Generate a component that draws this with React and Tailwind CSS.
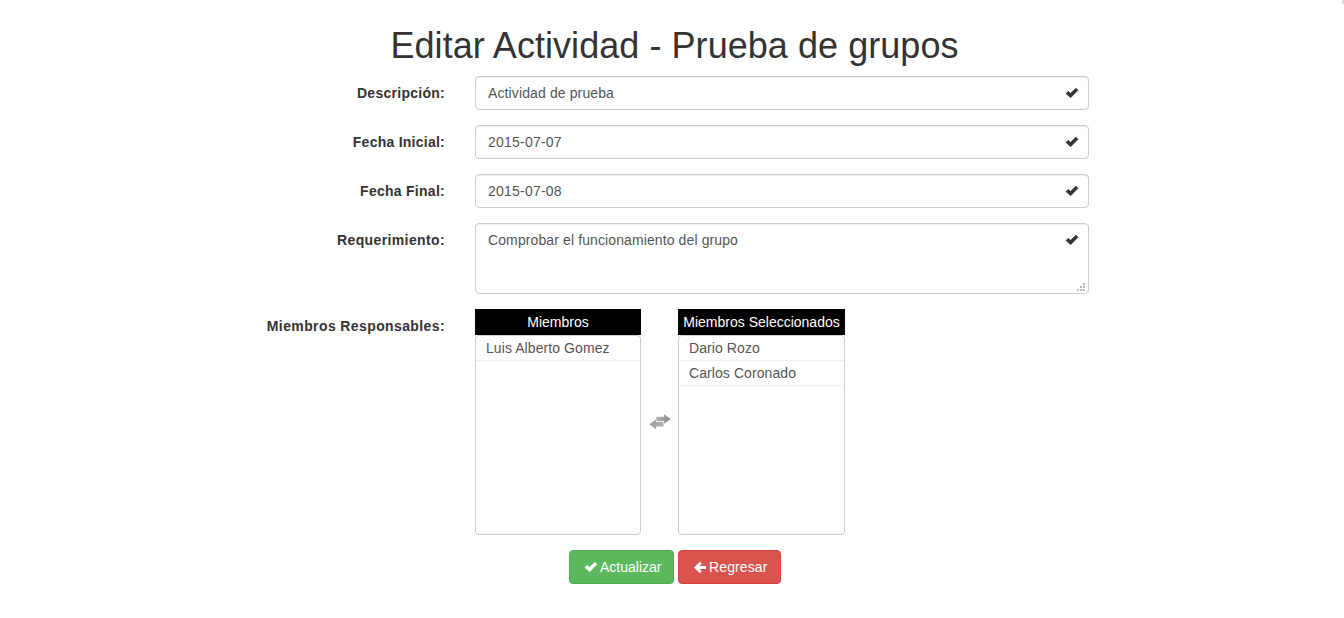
import React from "react";

function Check({ className }) {
  return (
    <svg viewBox="0 0 14 12" className={className} fill="currentColor" aria-hidden="true">
      <path d="M1.1 6.5 3.2 4.4 5.5 6.5 10.9 1.3 12.9 3.3 5.7 10.6Z" stroke="currentColor" strokeWidth="0.9" strokeLinejoin="round" />
    </svg>
  );
}

function Row({ label, children, labelClass }) {
  return (
    <div className="flex gap-[30px]">
      <label className={`w-[445px] shrink-0 pt-[7px] text-right font-bold leading-5 text-[#333] ${labelClass}`}>{label}</label>
      {children}
    </div>
  );
}

const fieldClass =
  "block w-full rounded border border-[#ccc] bg-white px-3 py-1.5 text-sm leading-5 text-[#555] shadow-[inset_0_1px_1px_rgba(0,0,0,0.075)] outline-none";

function Field({ label, value, labelClass, textClass }) {
  return (
    <Row label={label} labelClass={labelClass}>
      <div className="relative w-[614px]">
        <input className={`${fieldClass} h-[34px] ${textClass}`} defaultValue={value} />
        <Check className="absolute right-[10px] top-[11px] h-3 w-[14px] text-[#333]" />
      </div>
    </Row>
  );
}

function MemberList({ title, items, className }) {
  return (
    <div className={`flex h-[226px] flex-col ${className}`}>
      <div className="h-[26px] whitespace-nowrap bg-black pt-[3px] text-center leading-5 text-white">{title}</div>
      <ul className="flex-1 rounded border border-[#ccc]">
        {items.map((name) => (
          <li key={name} className="h-[25px] border-b border-[#eee] pl-[10px] pt-[2px] leading-5 tracking-[0.08px] text-[#555]">
            {name}
          </li>
        ))}
      </ul>
    </div>
  );
}

export default function App() {
  return (
    <div className="relative h-[618px] w-[1344px] overflow-hidden bg-white pt-[26px] font-['Liberation_Sans',Arial,sans-serif] text-sm text-[#333]">
      <div className="absolute right-0 top-0 h-1 w-0.5 bg-[#d5dbe3]" />
      <h1 className="mb-[10px] ml-[2.5px] w-[1344px] text-center text-[36px] font-normal leading-10 tracking-[0.05px]">
        Editar Actividad - Prueba de grupos
      </h1>
      <form className="flex flex-col gap-[15px]" onSubmit={(e) => e.preventDefault()}>
        <Field label="Descripción:" value="Actividad de prueba" labelClass="tracking-[0.27px]" textClass="tracking-[0.12px]" />
        <Field label="Fecha Inicial:" value="2015-07-07" labelClass="tracking-[0.25px]" textClass="tracking-[0.22px]" />
        <Field label="Fecha Final:" value="2015-07-08" labelClass="tracking-[0.27px]" textClass="tracking-[0.22px]" />
        <Row label="Requerimiento:" labelClass="tracking-[0.38px]">
          <div className="relative w-[614px]">
            <textarea
              className={`${fieldClass} h-[71px] resize-none tracking-[0.11px]`}
              defaultValue="Comprobar el funcionamiento del grupo"
            />
            <Check className="absolute right-[10px] top-[11px] h-3 w-[14px] text-[#333]" />
            <svg className="absolute bottom-[2px] right-[3px] h-[9px] w-[9px]" viewBox="0 0 9 9" fill="#bbb" aria-hidden="true">
              <path d="M6 0h2v2H6zM3 3h2v2H3zM6 3h2v2H6zM0 6h2v2H0zM3 6h2v2H3zM6 6h2v2H6z" />
            </svg>
          </div>
        </Row>
        <Row label="Miembros Responsables:" labelClass="tracking-[0.39px]">
          <div className="flex">
            <MemberList title="Miembros" items={["Luis Alberto Gomez"]} className="w-[166px]" />
            <div className="flex w-[37px] pl-[7.5px] pt-[105px]">
              <svg width="22" height="16" viewBox="0 0 22 16" aria-hidden="true">
                <defs>
                  <linearGradient id="swap" x1="0" y1="0" x2="1" y2="0">
                    <stop offset="0" stopColor="#b2b2b2" />
                    <stop offset="1" stopColor="#8c8c8c" />
                  </linearGradient>
                  <linearGradient id="swapBack" x1="0" y1="0" x2="1" y2="0">
                    <stop offset="0" stopColor="#9a9a9a" />
                    <stop offset="1" stopColor="#b2b2b2" />
                  </linearGradient>
                </defs>
                <path d="M7.3 2.7H15V0.2L21.6 5 15 9.8V7.2H7.3Z" fill="url(#swap)" />
                <path d="M14.5 8.1H7V5.4L0.4 10.3 7 15.2V12.5H14.5Z" fill="url(#swapBack)" />
              </svg>
            </div>
            <MemberList title="Miembros Seleccionados" items={["Dario Rozo", "Carlos Coronado"]} className="w-[167px]" />
          </div>
        </Row>
        <div className="flex gap-1 pl-[569px]">
          <button className="flex h-[34px] w-[105px] items-center rounded border border-[#4cae4c] bg-[#5cb85c] pl-[14px] text-white">
            <Check className="mr-[2px] h-3 w-[14px]" />
            Actualizar
          </button>
          <button className="flex h-[34px] w-[103px] items-center rounded border border-[#d43f3a] bg-[#d9534f] pl-[14px] tracking-[0.12px] text-white">
            <svg className="mr-[2px] h-[14px] w-[14px]" viewBox="0 0 14 14" fill="currentColor" aria-hidden="true">
              <path d="M1 7.5 6.8 1.7 8.9 3.8 6.7 6H13V9H6.7L8.9 11.2 6.8 13.3Z" />
            </svg>
            Regresar
          </button>
        </div>
      </form>
    </div>
  );
}
